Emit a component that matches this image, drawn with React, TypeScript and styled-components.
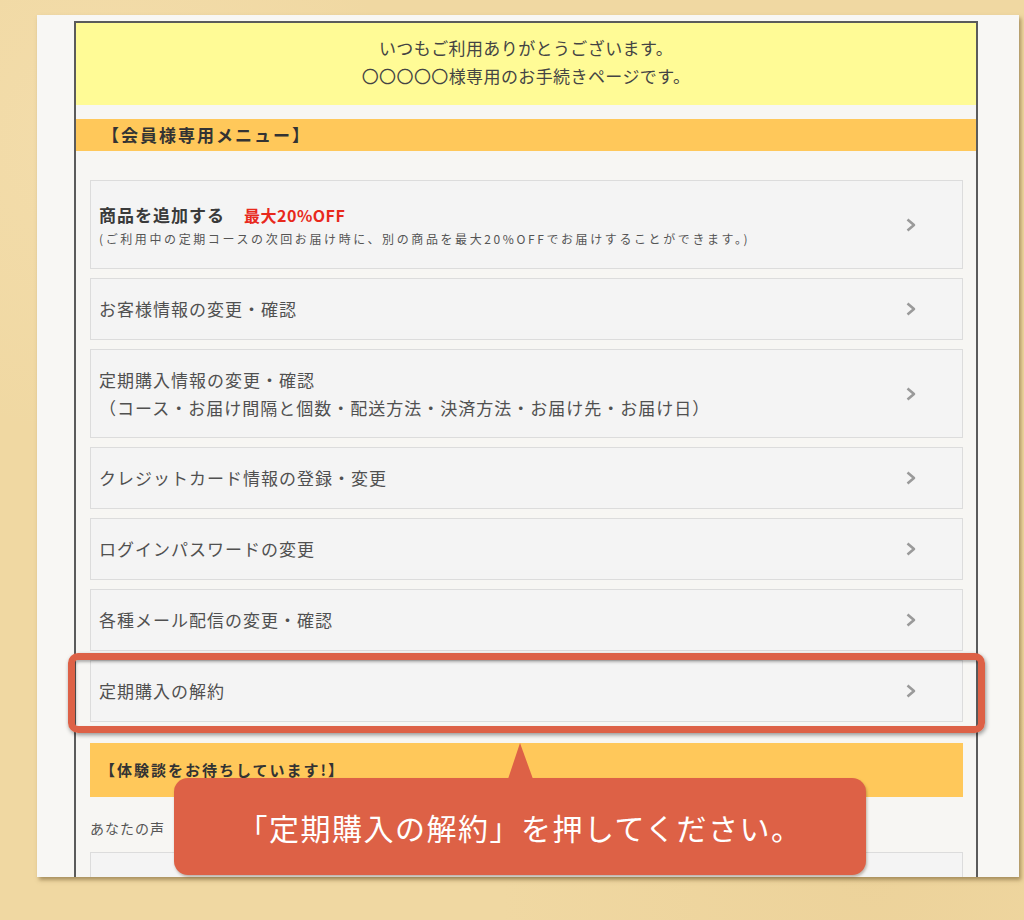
import styled, { createGlobalStyle } from "styled-components";

const GlobalStyle = createGlobalStyle`
  * {
    box-sizing: border-box;
  }
  body {
    margin: 0;
    background-color: #f0d8a2;
    background-image: radial-gradient(
        circle at 10% 15%,
        rgba(248, 228, 185, 0.4),
        transparent 25%
      ),
      radial-gradient(circle at 85% 95%, rgba(230, 200, 140, 0.35), transparent 30%);
    font-family: "Noto Sans CJK JP", "Noto Sans", sans-serif;
  }
`;

const Stage = styled.div`
  position: relative;
  width: 1024px;
  height: 920px;
  overflow: hidden;
  padding: 15px 0 0 37px;
`;

const Sheet = styled.div`
  width: 982px;
  height: 862px;
  overflow: hidden;
  background: #f8f7f4;
  padding: 6px 0 0 37px;
  box-shadow: 2px 3px 4px rgba(110, 85, 40, 0.55);
`;

const Frame = styled.div`
  width: 904px;
  min-height: 900px;
  border: 2px solid #5b5b5b;
  border-bottom: none;
  background: #f7f6f3;
`;

const Banner = styled.div`
  height: 82px;
  padding-top: 11px;
  background: #fffb96;
  color: #444;
  font-size: 17px;
  line-height: 28px;
  letter-spacing: 0.4px;
  text-align: center;
`;

const MenuHead = styled.div`
  margin-top: 14px;
  height: 32px;
  padding-left: 26px;
  background: #ffc85a;
  color: #333;
  font-size: 17px;
  font-weight: 700;
  line-height: 32px;
  letter-spacing: 2px;
`;

const Menu = styled.div`
  display: flex;
  flex-direction: column;
  gap: 9px;
  padding: 29px 13px 0 14px;
`;

const Item = styled.div<{ $tall?: boolean }>`
  display: flex;
  align-items: center;
  height: ${(p) => (p.$tall ? 89 : 62)}px;
  padding: 0 45px 0 8px;
  border: 1px solid #dcdcdc;
  background: #f4f4f4;
`;

const ItemBody = styled.div`
  display: flex;
  flex-direction: column;
  color: #505050;
  font-size: 17px;
  line-height: 28px;
  letter-spacing: 1px;
`;

const ItemTitle = styled.div`
  display: flex;
  align-items: baseline;
  gap: 19px;
  color: #3a3a3a;
  font-weight: 700;
`;

const Deal = styled.span`
  color: #e8291c;
  font-size: 16px;
  letter-spacing: 0.5px;
`;

const ItemNote = styled.div`
  color: #555;
  font-size: 12px;
  line-height: 20px;
  letter-spacing: 2.6px;
  white-space: nowrap;
`;

const Chevron = styled.svg`
  margin-left: auto;
  flex: none;
`;

const SectionBar = styled.div`
  margin: 21px 13px 0 14px;
  height: 54px;
  padding-left: 10px;
  background: #ffc85a;
  color: #333;
  font-size: 15px;
  font-weight: 700;
  line-height: 54px;
  letter-spacing: 2px;
`;

const VoiceText = styled.div`
  margin-top: 20px;
  padding-left: 14px;
  color: #555;
  font-size: 14px;
  line-height: 22px;
  letter-spacing: 1px;
`;

const VoiceBox = styled.div`
  margin: 13px 13px 0 14px;
  height: 100px;
  border: 1px solid #dcdcdc;
  background: #f4f4f4;
`;

const Ring = styled.div`
  position: absolute;
  left: 68px;
  top: 653px;
  width: 917px;
  height: 80px;
  border: 7px solid #dd6146;
  border-radius: 10px;
  box-shadow: 1px 2px 4px rgba(0, 0, 0, 0.4),
    inset 1px 2px 3px rgba(0, 0, 0, 0.3);
`;

const Callout = styled.div`
  position: absolute;
  left: 174px;
  top: 778px;
  width: 692px;
  height: 97px;
  display: flex;
  align-items: center;
  justify-content: center;
  border-radius: 14px;
  background: #dd6146;
  box-shadow: 1px 2px 3px rgba(80, 50, 20, 0.35);
  color: #fff;
  font-size: 30px;
  letter-spacing: 1.5px;

  &::before {
    content: "";
    position: absolute;
    left: 334px;
    top: -35px;
    border-left: 12px solid transparent;
    border-right: 13px solid transparent;
    border-bottom: 36px solid #dd6146;
  }
`;

const Arrow = () => (
  <Chevron width="12" height="16" viewBox="0 0 12 16">
    <polyline
      points="2.5,2.5 9,8 2.5,13.5"
      fill="none"
      stroke="#9a9a9a"
      strokeWidth="2.6"
      strokeLinejoin="round"
    />
  </Chevron>
);

const items = [
  "お客様情報の変更・確認",
  "__long",
  "クレジットカード情報の登録・変更",
  "ログインパスワードの変更",
  "各種メール配信の変更・確認",
  "定期購入の解約",
];

const App = () => {
  return (
    <>
      <GlobalStyle />
      <Stage>
        <Sheet>
          <Frame>
            <Banner>
              いつもご利用ありがとうございます。
              <br />
              〇〇〇〇〇様専用のお手続きページです。
            </Banner>
            <MenuHead>【会員様専用メニュー】</MenuHead>
            <Menu>
              <Item $tall>
                <ItemBody>
                  <ItemTitle>
                    商品を追加する
                    <Deal>最大20%OFF</Deal>
                  </ItemTitle>
                  <ItemNote>
                    (ご利用中の定期コースの次回お届け時に、別の商品を最大20%OFFでお届けすることができます。)
                  </ItemNote>
                </ItemBody>
                <Arrow />
              </Item>
              {items.map((label) =>
                label === "__long" ? (
                  <Item $tall key={label}>
                    <ItemBody>
                      定期購入情報の変更・確認
                      <br />
                      （コース・お届け間隔と個数・配送方法・決済方法・お届け先・お届け日）
                    </ItemBody>
                    <Arrow />
                  </Item>
                ) : (
                  <Item key={label}>
                    <ItemBody>{label}</ItemBody>
                    <Arrow />
                  </Item>
                )
              )}
            </Menu>
            <SectionBar>【体験談をお待ちしています!】</SectionBar>
            <VoiceText>あなたの声</VoiceText>
            <VoiceBox />
          </Frame>
        </Sheet>
        <Ring />
        <Callout>「定期購入の解約」を押してください。</Callout>
      </Stage>
    </>
  );
};

export default App;
